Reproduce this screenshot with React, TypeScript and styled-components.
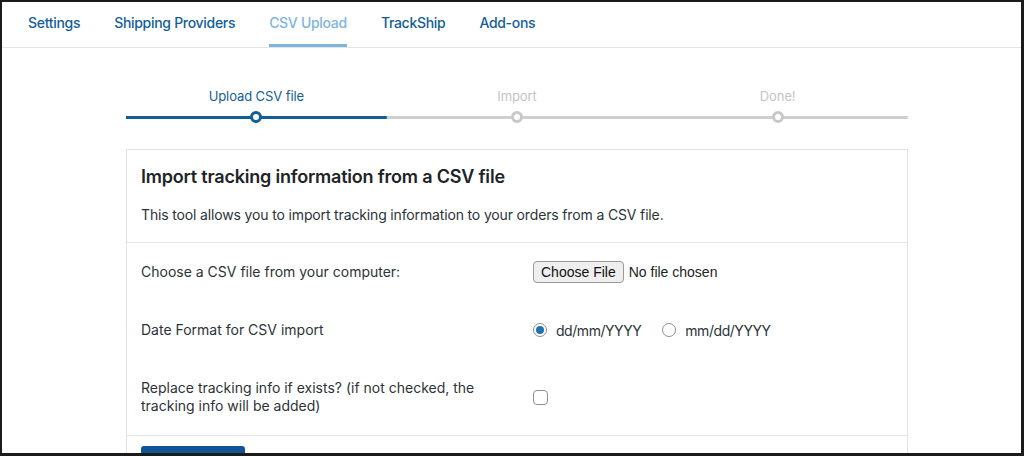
import React from "react";
import styled, { createGlobalStyle } from "styled-components";

const Global = createGlobalStyle`
  html, body { margin: 0; padding: 0; background: #fff; }
  body { font-family: Inter, "Noto Sans", sans-serif; overflow: hidden; }
  * { box-sizing: border-box; }
`;

const Frame = styled.div`
  width: 1024px;
  height: 456px;
  border-style: solid;
  border-color: #1b1b1b;
  border-width: 2px 3px 3px 2px;
  background: #fff;
  overflow: hidden;
  display: flex;
  flex-direction: column;
`;

const TabBar = styled.nav`
  display: flex;
  gap: 34px;
  padding: 0 0 0 26px;
  height: 46px;
  border-bottom: 1px solid #e4e4e4;
  flex-shrink: 0;
`;

const Tab = styled.a<{ $active?: boolean }>`
  display: flex;
  align-items: center;
  font-size: 14px;
  font-weight: 500;
  color: ${(p) => (p.$active ? "#7db5dd" : "#135e96")};
  text-decoration: none;
  border-bottom: 3px solid ${(p) => (p.$active ? "#7db5dd" : "transparent")};
  padding-bottom: 1px;
  letter-spacing: -0.3px;
`;

const Content = styled.main`
  padding: 39px 0 0 124px;
  width: 906px;
  display: flex;
  flex-direction: column;
  gap: 26px;
`;

const Stepper = styled.div`
  display: flex;
`;

const Step = styled.div`
  flex: 1;
  display: flex;
  flex-direction: column;
  align-items: center;
  gap: 6px;
`;

const StepLabel = styled.span<{ $active?: boolean }>`
  font-size: 13px;
  line-height: 18px;
  letter-spacing: -0.1px;
  color: ${(p) => (p.$active ? "#135e96" : "#c3c4c7")};
`;

const Track = styled.div<{ $active?: boolean }>`
  width: 100%;
  height: 12px;
  display: flex;
  justify-content: center;
  align-items: center;
  background: linear-gradient(
      ${(p) => (p.$active ? "#135e96" : "#cfcfcf")},
      ${(p) => (p.$active ? "#135e96" : "#cfcfcf")}
    )
    center / 100% 3px no-repeat;
`;

const Dot = styled.span<{ $active?: boolean }>`
  width: 12px;
  height: 12px;
  border-radius: 50%;
  background: #fff;
  border: 3.5px solid ${(p) => (p.$active ? "#135e96" : "#c8c8c8")};
`;

const Card = styled.section`
  border: 1px solid #e3e3e3;
  background: #fff;
`;

const CardHead = styled.div`
  padding: 15px 14px 18px;
  display: flex;
  flex-direction: column;
  gap: 17px;
  border-bottom: 1px solid #e6e6e6;
`;

const Title = styled.h2`
  margin: 0;
  font-size: 18px;
  line-height: 24px;
  font-weight: 600;
  letter-spacing: -0.2px;
  color: #1d2327;
`;

const Desc = styled.p`
  margin: 0;
  font-size: 14px;
  line-height: 18px;
  letter-spacing: -0.15px;
  color: #2c3338;
`;

const FormBody = styled.div`
  padding: 0 14px;
  border-bottom: 1px solid #e6e6e6;
`;

const Row = styled.div`
  display: grid;
  grid-template-columns: 392px 1fr;
  align-items: center;
  padding: 20px 0;
`;

const Label = styled.div`
  font-size: 14px;
  line-height: 18px;
  color: #2c3338;
  padding-right: 12px;
`;

const Field = styled.div`
  display: flex;
  align-items: center;
  gap: 10px;
  height: 18px;
`;

const FileButton = styled.button`
  font-family: "Liberation Sans", Arial, sans-serif;
  font-size: 14px;
  height: 22px;
  padding: 0 7px;
  background: #efefef;
  border: 1px solid #9a9a9a;
  border-radius: 4px;
  color: #111;
  display: flex;
  align-items: center;
  flex-shrink: 0;
`;

const FileText = styled.span`
  font-family: "Liberation Sans", Arial, sans-serif;
  font-size: 14px;
  color: #222;
  margin-left: -5px;
`;

const RadioGroup = styled.div`
  display: flex;
  align-items: center;
  gap: 21px;
  height: 18px;
`;

const RadioOption = styled.label`
  display: flex;
  align-items: center;
  gap: 9px;
  font-size: 14px;
  letter-spacing: -0.45px;
  color: #2c3338;
`;

const Radio = styled.span<{ $checked?: boolean }>`
  width: 14px;
  height: 14px;
  border-radius: 50%;
  border: 1px solid #8c8f94;
  background: #fff;
  display: flex;
  align-items: center;
  justify-content: center;
  &::after {
    content: "";
    width: 8px;
    height: 8px;
    border-radius: 50%;
    background: ${(p) => (p.$checked ? "#2271b1" : "transparent")};
  }
`;

const Checkbox = styled.span`
  width: 15px;
  height: 15px;
  border: 1px solid #8c8f94;
  border-radius: 4px;
  background: #fff;
`;

const Footer = styled.div`
  padding: 10px 14px;
`;

const PrimaryButton = styled.button`
  width: 104px;
  height: 34px;
  border: none;
  border-radius: 3px;
  background: #0f5596;
  color: #fff;
  font-size: 14px;
`;

export default function App() {
  const tabs = ["Settings", "Shipping Providers", "CSV Upload", "TrackShip", "Add-ons"];
  const steps = ["Upload CSV file", "Import", "Done!"];
  return (
    <>
      <Global />
      <Frame>
        <TabBar>
          {tabs.map((t) => (
            <Tab key={t} $active={t === "CSV Upload"}>
              {t}
            </Tab>
          ))}
        </TabBar>
        <Content>
          <Stepper>
            {steps.map((s, i) => (
              <Step key={s}>
                <StepLabel $active={i === 0}>{s}</StepLabel>
                <Track $active={i === 0}>
                  <Dot $active={i === 0} />
                </Track>
              </Step>
            ))}
          </Stepper>
          <Card>
            <CardHead>
              <Title>Import tracking information from a CSV file</Title>
              <Desc>
                This tool allows you to import tracking information to your orders from a CSV file.
              </Desc>
            </CardHead>
            <FormBody>
              <Row>
                <Label>Choose a CSV file from your computer:</Label>
                <Field>
                  <FileButton>Choose File</FileButton>
                  <FileText>No file chosen</FileText>
                </Field>
              </Row>
              <Row>
                <Label>Date Format for CSV import</Label>
                <RadioGroup>
                  <RadioOption>
                    <Radio $checked />
                    dd/mm/YYYY
                  </RadioOption>
                  <RadioOption>
                    <Radio />
                    mm/dd/YYYY
                  </RadioOption>
                </RadioGroup>
              </Row>
              <Row>
                <Label>
                  Replace tracking info if exists? (if not checked, the tracking info will be added)
                </Label>
                <Field>
                  <Checkbox />
                </Field>
              </Row>
            </FormBody>
            <Footer>
              <PrimaryButton>Upload</PrimaryButton>
            </Footer>
          </Card>
        </Content>
      </Frame>
    </>
  );
}
